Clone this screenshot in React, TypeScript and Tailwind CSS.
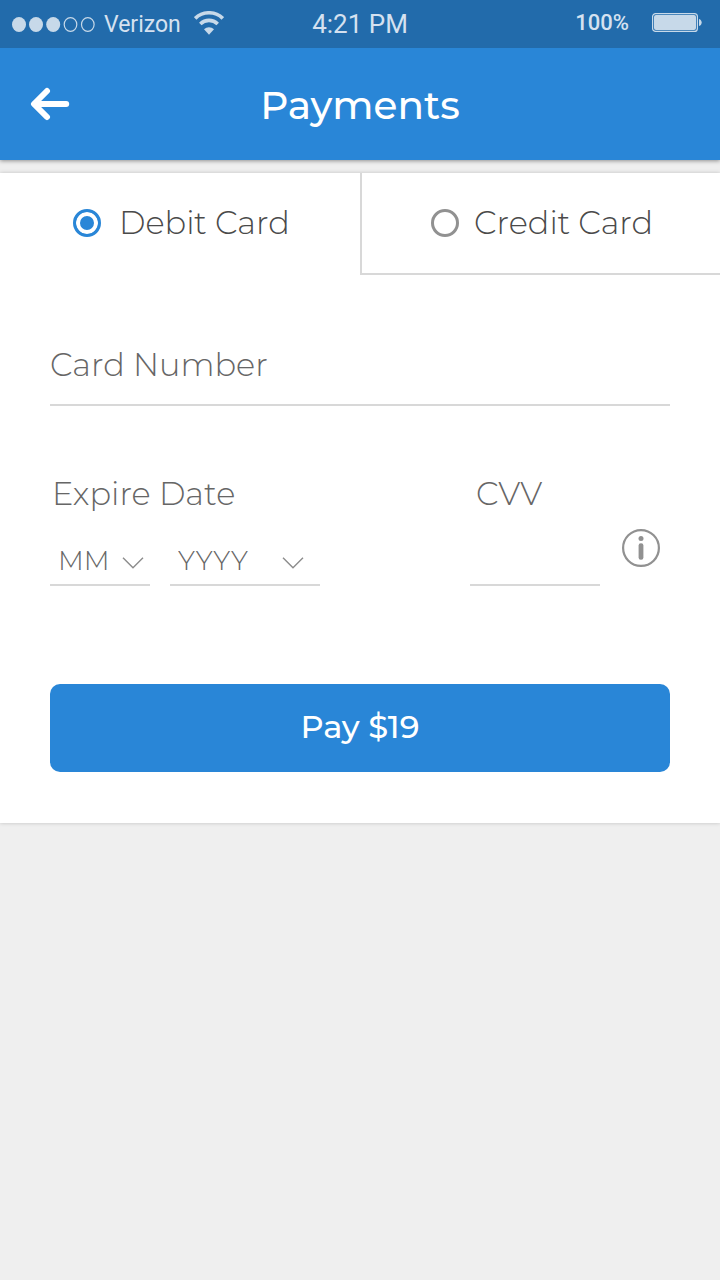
import { useState, type ReactNode } from "react";

function StatusBar() {
  return (
    <div className="relative z-10 flex h-12 items-center justify-between bg-[#226bab] pr-[18px] pl-3 font-[Roboto,sans-serif] text-[#d5e1f0]">
      <div className="flex items-center">
        <svg width="84" height="16" viewBox="0 0 84 16" className="mr-2" aria-hidden="true">
          <g fill="#c7d9e9">
            <ellipse cx="7" cy="8.5" rx="7" ry="7.5" />
            <ellipse cx="24" cy="8.5" rx="7" ry="7.5" />
            <ellipse cx="41.2" cy="8.5" rx="7" ry="7.5" />
          </g>
          <g fill="none" stroke="#c7d9e9" strokeWidth="1.2">
            <ellipse cx="58.5" cy="8.5" rx="6.3" ry="6.9" />
            <ellipse cx="75.8" cy="8.5" rx="6.3" ry="6.9" />
          </g>
        </svg>
        <span className="pt-0.5 text-[23px]">Verizon</span>
        <svg width="30" height="24" viewBox="0 0 30 24" className="mb-0.5 ml-[13px]" aria-hidden="true">
          <g fill="none" stroke="#c7d9e9" strokeWidth="3.6">
            <path d="M1.2 7.4 C8.8 -0.1 21.2 -0.1 28.8 7.4" />
            <path d="M6.3 13 C11.2 8.2 18.8 8.2 23.7 13" />
          </g>
          <path d="M10 18.3 C12.8 15.6 17.2 15.6 20 18.3 L15 23.8 Z" fill="#c7d9e9" />
        </svg>
      </div>
      <div className="flex items-center pb-1">
        <span className="mr-[23px] text-[22px] font-medium">100%</span>
        <svg width="50" height="19" viewBox="0 0 50 19" aria-hidden="true">
          <rect x="0.6" y="0.6" width="44.8" height="17.8" rx="3" fill="none" stroke="#c7d9e9" strokeWidth="1.2" />
          <rect x="2" y="2" width="42" height="15" rx="2" fill="#c7d9e9" />
          <path d="M47 6 C50.6 7 50.6 12 47 13 Z" fill="#c7d9e9" />
        </svg>
      </div>
      <span className="absolute inset-x-0 top-1 text-center text-[26px] leading-10">4:21 PM</span>
    </div>
  );
}

function Header() {
  return (
    <header className="relative grid h-28 grid-cols-[1fr_auto_1fr] items-center bg-[#2986d7] px-[30px] shadow-[0_1px_4px_rgba(0,0,0,0.4)]">
      <button type="button" aria-label="Back" className="justify-self-start">
        <svg width="40" height="34" viewBox="0 0 40 34" fill="none" stroke="#fff" strokeWidth="6" strokeLinecap="round" strokeLinejoin="round">
          <path d="M17 4 L4 17 L17 30" />
          <path d="M5 17 H36.2" />
          <path d="M4.5 17 L10 13 V21 Z" strokeWidth="1" fill="#fff" />
        </svg>
      </button>
      <h1 className="pt-0.5 text-[39px] leading-12 font-medium text-white">Payments</h1>
    </header>
  );
}

type CardKind = "debit" | "credit";

function KindTab({ label, selected, onSelect, className }: { label: string; selected: boolean; onSelect: () => void; className: string }) {
  return (
    <label
      className={`flex h-[102px] items-center border-b-2 border-[#d8d8d8] text-[32px] leading-10 font-[350] text-[#4a4a4a] ${className} ${
        selected ? "border-b-transparent" : ""
      }`}
    >
      <input
        type="radio"
        name="card-kind"
        checked={selected}
        onChange={onSelect}
        className="size-7 shrink-0 appearance-none rounded-full border-[3px] border-[#919191] bg-white checked:border-[#2986d7] checked:bg-[#2986d7] checked:shadow-[inset_0_0_0_4px_#fff]"
      />
      {label}
    </label>
  );
}

function Dropdown({ label, placeholder, options, className, arrowClassName }: { label: string; placeholder: string; options: string[]; className: string; arrowClassName: string }) {
  return (
    <div className={`grid items-center border-b-2 border-[#d8d8d8] ${className}`}>
      <select
        aria-label={label}
        defaultValue=""
        className="col-start-1 row-start-1 h-[46px] w-full appearance-none bg-transparent px-2 text-[27px] font-[350] text-[#666] outline-none"
      >
        <option value="">{placeholder}</option>
        {options.map((o) => (
          <option key={o}>{o}</option>
        ))}
      </select>
      <svg
        width="22"
        height="12"
        viewBox="0 0 22 12"
        fill="none"
        stroke="#8c8c8c"
        strokeWidth="1.4"
        className={`pointer-events-none col-start-1 row-start-1 mt-1 justify-self-end ${arrowClassName}`}
        aria-hidden="true"
      >
        <path d="M1 0.8 L11 10.8 L21 0.8" />
      </svg>
    </div>
  );
}

function FieldLabel({ htmlFor, children }: { htmlFor?: string; children: ReactNode }) {
  return (
    <label htmlFor={htmlFor} className="block pl-0.5 text-[32px] leading-10 font-[350] text-[#666]">
      {children}
    </label>
  );
}

const months = ["01", "02", "03", "04", "05", "06", "07", "08", "09", "10", "11", "12"];
const years = ["2025", "2026", "2027", "2028", "2029", "2030"];

export default function App() {
  const [kind, setKind] = useState<CardKind>("debit");
  return (
    <div className="min-h-screen bg-[#efefef] font-[Montserrat,Inter,sans-serif]">
      <StatusBar />
      <Header />
      <main className="mt-[13px] bg-white shadow-[0_0_4px_rgba(0,0,0,0.2)]">
        <form onSubmit={(e) => e.preventDefault()}>
          <div className="grid grid-cols-2">
            <KindTab label="Debit Card" selected={kind === "debit"} onSelect={() => setKind("debit")} className="gap-[18px] pl-[73px]" />
            <KindTab label="Credit Card" selected={kind === "credit"} onSelect={() => setKind("credit")} className="gap-[15px] border-l-2 pl-[69px]" />
          </div>
          <div className="px-[50px] pt-[50px] pb-[51px]">
            <input
              type="text"
              inputMode="numeric"
              aria-label="Card Number"
              placeholder="Card Number"
              className="h-[81px] w-full border-b-2 border-[#d8d8d8] bg-transparent text-[32px] font-[350] text-[#666] outline-none placeholder:text-[#666] placeholder:opacity-100"
            />
            <div className="mt-[68px] flex justify-between">
              <div>
                <FieldLabel>Expire Date</FieldLabel>
                <div className="mt-6 flex gap-5">
                  <Dropdown label="Expiry month" placeholder="MM" options={months} className="w-[100px]" arrowClassName="mr-1.5" />
                  <Dropdown label="Expiry year" placeholder="YYYY" options={years} className="w-[150px]" arrowClassName="mr-4" />
                </div>
              </div>
              <div className="w-[200px]">
                <div className="pl-1">
                  <FieldLabel htmlFor="cvv">CVV</FieldLabel>
                </div>
                <div className="mt-2.5 flex items-start gap-[21px]">
                  <input
                    id="cvv"
                    type="text"
                    inputMode="numeric"
                    className="h-[62px] w-[130px] border-b-2 border-[#d8d8d8] bg-transparent px-2 text-[27px] font-[350] text-[#666] outline-none"
                  />
                  <button type="button" aria-label="About CVV" className="mt-1">
                    <svg width="40" height="40" viewBox="0 0 40 40">
                      <circle cx="20" cy="20" r="17.9" fill="none" stroke="#919191" strokeWidth="2.2" />
                      <circle cx="20" cy="10.6" r="2.5" fill="#919191" />
                      <rect x="17.6" y="15.2" width="4.8" height="16.6" rx="2.2" fill="#919191" />
                    </svg>
                  </button>
                </div>
              </div>
            </div>
            <button type="submit" className="mt-[98px] h-[88px] w-full rounded-[10px] bg-[#2986d7] pb-0.5 text-[32px] font-medium text-white">
              Pay $19
            </button>
          </div>
        </form>
      </main>
    </div>
  );
}
